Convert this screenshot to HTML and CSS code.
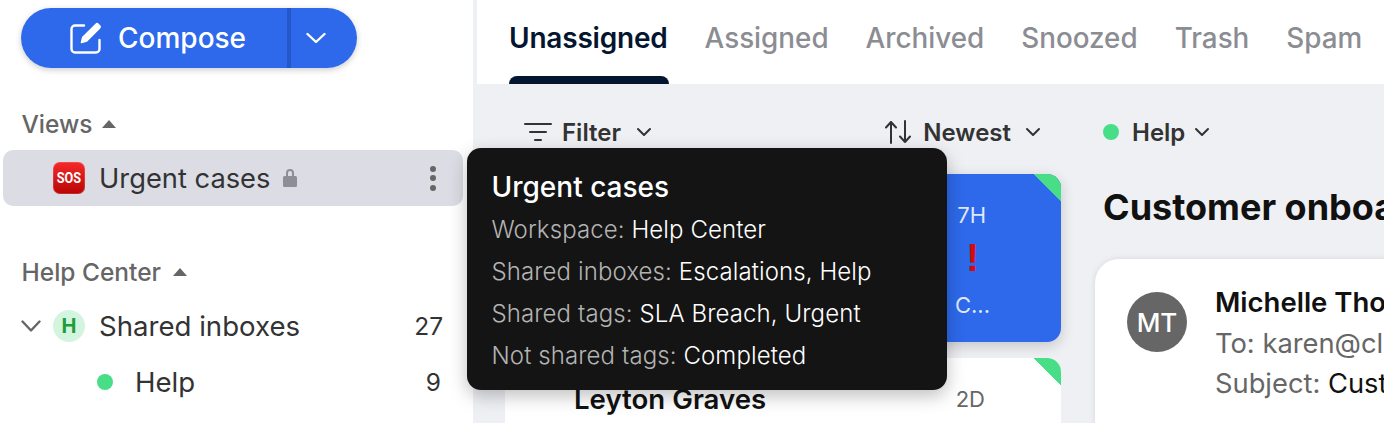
FILE: index.html
```html
<!DOCTYPE html>
<html lang="en">
<head>
  <meta charset="UTF-8">
  <title>Shared inboxes</title>
  <link rel="stylesheet" href="styles.css">
</head>
<body>
  <div class="app">
    <aside class="sidebar">
      <div class="compose">
        <button class="compose-main">
          <svg class="compose-icon" viewBox="0 0 32 32" fill="none" stroke="#fff" stroke-width="2.4" stroke-linecap="round" stroke-linejoin="round">
            <path d="M14 3.500H5a3.500 3.500 0 0 0-3.500 3.500v20A3.500 3.500 0 0 0 5 30.500h21a3.500 3.500 0 0 0 3.500-3.500V18"/>
            <path d="M11.500 20.500l1.300-5.300L26 2.200a1.500 1.500 0 0 1 2.100 0l1.600 1.600a1.500 1.500 0 0 1 0 2.100L16.700 19z" fill="#fff" stroke-width="1.600"/>
          </svg>
          <span>Compose</span>
        </button>
        <button class="compose-more">
          <svg class="chevron-lg" viewBox="0 0 20 12" fill="none" stroke="#fff" stroke-width="2.400" stroke-linecap="round" stroke-linejoin="round"><path d="M1.500 2l8.500 8 8.500-8"/></svg>
        </button>
      </div>

      <div class="section-head section-views">Views <span class="caret"></span></div>
      <div class="nav-row selected">
        <span class="sos"><span>SOS</span></span>
        <span class="nav-name">Urgent cases</span>
        <svg class="lock" viewBox="0 0 14 20" fill="#8e8f94"><path d="M3 8V5a4 4 0 0 1 8 0v3h1.500A1.500 1.500 0 0 1 14 9.500v8a1.500 1.500 0 0 1-1.500 1.500h-11A1.500 1.500 0 0 1 0 17.500v-8A1.500 1.500 0 0 1 1.500 8zm2 0h4V5a2 2 0 0 0-4 0z"/></svg>
        <span class="dots"><i></i><i></i><i></i></span>
      </div>

      <div class="section-head section-help">Help Center <span class="caret"></span></div>
      <div class="nav-row">
        <svg class="tree-chevron" viewBox="0 0 20 12" fill="none" stroke="#666" stroke-width="2.400" stroke-linecap="round" stroke-linejoin="round"><path d="M1.500 1.500l8.500 9 8.500-9"/></svg>
        <span class="workspace-badge">H</span>
        <span class="nav-name">Shared inboxes</span>
        <span class="count">27</span>
      </div>
      <div class="nav-row nav-child">
        <span class="dot"></span>
        <span class="nav-name">Help</span>
        <span class="count">9</span>
      </div>
    </aside>

    <main class="main">
      <nav class="tabs">
        <a class="tab active">Unassigned</a>
        <a class="tab">Assigned</a>
        <a class="tab">Archived</a>
        <a class="tab">Snoozed</a>
        <a class="tab">Trash</a>
        <a class="tab">Spam</a>
      </nav>

      <div class="content">
        <section class="list">
          <div class="toolbar">
            <div class="tool">
              <svg class="filter-icon" viewBox="0 0 28 20" fill="none" stroke="#333" stroke-width="2" stroke-linecap="round"><path d="M1 2h26M6 10h16M11 18h6"/></svg>
              <span class="filter-label">Filter</span>
              <svg class="chevron" viewBox="0 0 16 10" fill="none" stroke="#333" stroke-width="2" stroke-linecap="round" stroke-linejoin="round"><path d="M2 2l6 6 6-6"/></svg>
            </div>
            <div class="tool tool-sort">
              <svg class="sort-icon" viewBox="1 0 26 24" fill="none" stroke="#333" stroke-width="2" stroke-linecap="round" stroke-linejoin="round"><path d="M7 23V2M2 7.500L7 2l5 5.500M21 1v21M16 16.500L21 22l5-5.500"/></svg>
              <span class="sort-label">Newest</span>
              <svg class="chevron" viewBox="0 0 16 10" fill="none" stroke="#333" stroke-width="2" stroke-linecap="round" stroke-linejoin="round"><path d="M2 2l6 6 6-6"/></svg>
            </div>
          </div>

          <article class="card card-active">
            <span class="card-time">7H</span>
            <span class="card-flag">!</span>
            <span class="card-tag">C...</span>
          </article>
          <article class="card card-next">
            <span class="card-name">Leyton Graves</span>
            <span class="card-time">2D</span>
          </article>
        </section>

        <section class="detail">
          <div class="inbox-picker">
            <span class="dot"></span>
            <span class="picker-label">Help</span>
            <svg class="chevron" viewBox="0 0 16 10" fill="none" stroke="#333" stroke-width="2" stroke-linecap="round" stroke-linejoin="round"><path d="M2 2l6 6 6-6"/></svg>
          </div>
          <h2 class="detail-title">Customer onboarding</h2>
          <div class="message">
            <span class="avatar">MT</span>
            <div class="message-meta">
              <div class="sender">Michelle Thompson</div>
              <div class="meta-line">To: karen@cle</div>
              <div class="meta-line">Subject: <span class="subject">Customer onboarding</span></div>
            </div>
          </div>
        </section>
      </div>
    </main>

    <div class="tooltip">
      <div class="tooltip-title">Urgent cases</div>
      <div class="tooltip-line"><span>Workspace:</span> Help Center</div>
      <div class="tooltip-line"><span>Shared inboxes:</span> Escalations, Help</div>
      <div class="tooltip-line"><span>Shared tags:</span> SLA Breach, Urgent</div>
      <div class="tooltip-line"><span>Not shared tags:</span> Completed</div>
    </div>
  </div>
</body>
</html>
```

FILE: styles.css
```css
* { box-sizing: border-box; }
html, body { margin: 0; height: 100%; overflow: hidden; }
body { font-family: Inter, "Liberation Sans", sans-serif; color: #333; background: #fff; }
button { font-family: inherit; border: none; cursor: pointer; color: #fff; background: #2d69ea; }

.app { position: relative; display: flex; width: 1384px; height: 423px; overflow: hidden; }

/* sidebar */
.sidebar { flex: 0 0 473px; padding-top: 8px; }
.compose { display: flex; width: 336px; height: 60px; margin-left: 21px; border-radius: 30px; box-shadow: 0 2px 6px rgba(0, 0, 0, .2); overflow: hidden; }
.compose-main { display: flex; align-items: center; gap: 16px; width: 270px; padding-left: 49px; font-size: 28px; font-weight: 500; border-right: 4px solid #2458c8; }
.compose-icon { width: 32px; height: 32px; }
.compose-more { flex: 1; display: flex; align-items: center; padding-left: 15px; }
.chevron-lg { width: 20px; height: 12px; }

.section-head { display: flex; align-items: center; height: 24px; margin-left: 21.500px; font-size: 24.500px; font-weight: 500; color: #666; }
.section-views { margin-top: 44px; gap: 9.500px; }
.section-help { margin-top: 54px; gap: 11.500px; }
.caret { width: 0; height: 0; border-left: 7.500px solid transparent; border-right: 7.500px solid transparent; border-bottom: 8px solid #666; }

.nav-row { display: flex; align-items: center; height: 56px; margin: 0 10px 0 3px; font-size: 27.600px; color: #333; }
.section-views + .nav-row { margin-top: 14px; }
.section-help + .nav-row { margin-top: 14px; }
.selected { font-size: 27.300px; background: #dcdde4; border-radius: 10px; }
.nav-name { margin-left: 14px; }

.sos { display: flex; align-items: center; justify-content: center; width: 32px; height: 32px; margin-left: 50px; border-radius: 7px; background: linear-gradient(#f42a2a, #b90404); box-shadow: inset 0 0 0 1px rgba(255, 255, 255, .15); color: #fff; font-family: Roboto, sans-serif; font-size: 15.500px; font-weight: 700; }
.sos span { transform: scaleX(.82); }
.lock { width: 14px; height: 20px; margin-left: 13px; }
.dots { display: flex; flex-direction: column; gap: 3.500px; margin-left: auto; margin-right: 27px; }
.dots i { width: 6px; height: 6px; border-radius: 50%; background: #666; }

.tree-chevron { width: 20px; height: 12px; margin-left: 18px; }
.workspace-badge { display: flex; align-items: center; justify-content: center; width: 32px; height: 32px; margin-left: 12px; border-radius: 50%; background: #d3f5e0; color: #1f9d3a; font-size: 20px; font-weight: 700; }
.count { margin-left: auto; margin-right: 20px; font-size: 24.500px; }
.nav-child .nav-name { margin-left: 22px; }
.nav-child .count { margin-right: 22px; }
.dot { flex: none; width: 16px; height: 16px; border-radius: 50%; background: #48de88; }
.nav-child .dot { margin-left: 94px; }

/* main */
.main { flex: 1; min-width: 0; background: #eff0f4; }
.tabs { display: flex; gap: 37px; height: 84px; margin-left: 4px; padding-left: 32px; background: #fff; }
.tab { position: relative; padding-top: 21px; font-size: 27.800px; font-weight: 500; color: #8b8d92; }
.tab.active { font-size: 28px; font-weight: 600; letter-spacing: -.2px; color: #03152f; }
.tab.active::after { content: ""; position: absolute; left: 0; right: -1px; bottom: 0; height: 8px; border-radius: 8px 8px 0 0; background: #03152f; }

.content { display: flex; }
.list { flex: 0 0 556px; margin-left: 32px; }
.toolbar { display: flex; justify-content: space-between; align-items: center; height: 32px; margin-top: 32px; padding: 0 20px 0 19px; }
.tool { display: flex; align-items: center; font-size: 24px; font-weight: 600; color: #333; }
.filter-icon { width: 28px; height: 20px; }
.filter-label { margin-left: 10px; }
.chevron { width: 16px; height: 10px; margin-left: 15px; }
.tool-sort .chevron { margin-left: 14px; }
.sort-icon { width: 26px; height: 24px; }
.sort-label { margin-left: 12px; }

.card { position: relative; display: flex; flex-direction: column; align-items: flex-end; margin-top: 26px; padding-right: 71px; background: #fff; border-radius: 14px; overflow: hidden; box-shadow: 0 4px 14px rgba(0, 0, 0, .18); }
.card::after { content: ""; position: absolute; top: 0; right: 0; width: 28px; height: 28px; background: linear-gradient(to top right, transparent 50%, #48de88 50%); }
.card-time { font-size: 22px; color: #666; }
.card-active { height: 168px; padding-top: 28px; background: #2d69ea; color: #fff; }
.card-active .card-time { color: #dfe8fc; margin-right: 4px; }
.card-flag { margin: 11px 11px 0 0; font-family: "Liberation Sans", sans-serif; font-size: 38px; line-height: 38px; font-weight: 700; color: #d40b0b; }
.card-tag { margin-top: 15px; font-size: 22px; color: #dfe8fc; }
.card-next { flex-direction: row; justify-content: flex-end; align-items: center; height: 80px; margin-top: 16px; padding: 2px 76px 0 69px; box-shadow: none; }
.card-name { margin-right: auto; font-size: 27.600px; font-weight: 600; color: #111; }

.detail { flex: none; width: 800px; margin-left: 34px; }
.inbox-picker { display: flex; align-items: center; height: 32px; margin-top: 32px; padding-left: 8px; font-size: 24px; font-weight: 600; color: #333; }
.picker-label { margin-left: 13px; }
.inbox-picker .chevron { margin-left: 9px; }
.detail-title { margin: 37px 0 0 8px; font-size: 36px; line-height: 44px; font-weight: 700; color: #111; white-space: nowrap; }
.message { display: flex; width: 800px; height: 200px; margin-top: 30px; padding: 33px 0 0 32px; background: #fff; border-radius: 24px; box-shadow: 0 0 6px rgba(0, 0, 0, .1); white-space: nowrap; }
.avatar { flex: none; display: flex; align-items: center; justify-content: center; width: 60px; height: 60px; border-radius: 50%; background: #666; color: #fff; font-size: 26px; font-weight: 500; }
.message-meta { margin: -6px 0 0 28px; }
.sender { margin-bottom: 10px; font-size: 27.500px; line-height: 32px; font-weight: 600; color: #111; }
.meta-line { margin-top: 8px; font-size: 27.300px; line-height: 32px; color: #666; }
.subject { color: #111; }

/* tooltip over the list */
.tooltip { position: absolute; left: 467px; top: 148px; width: 480px; height: 242px; padding: 20px 24.500px; border-radius: 14px; background: #141414; color: #fff; box-shadow: 0 6px 18px rgba(0, 0, 0, .25); }
.tooltip-title { height: 41px; font-size: 28px; line-height: 38px; font-weight: 500; }
.tooltip-line { height: 42px; font-size: 24px; line-height: 42px; font-weight: 300; letter-spacing: .1px; white-space: nowrap; }
.tooltip-line span { color: #b3b3b3; }
```
